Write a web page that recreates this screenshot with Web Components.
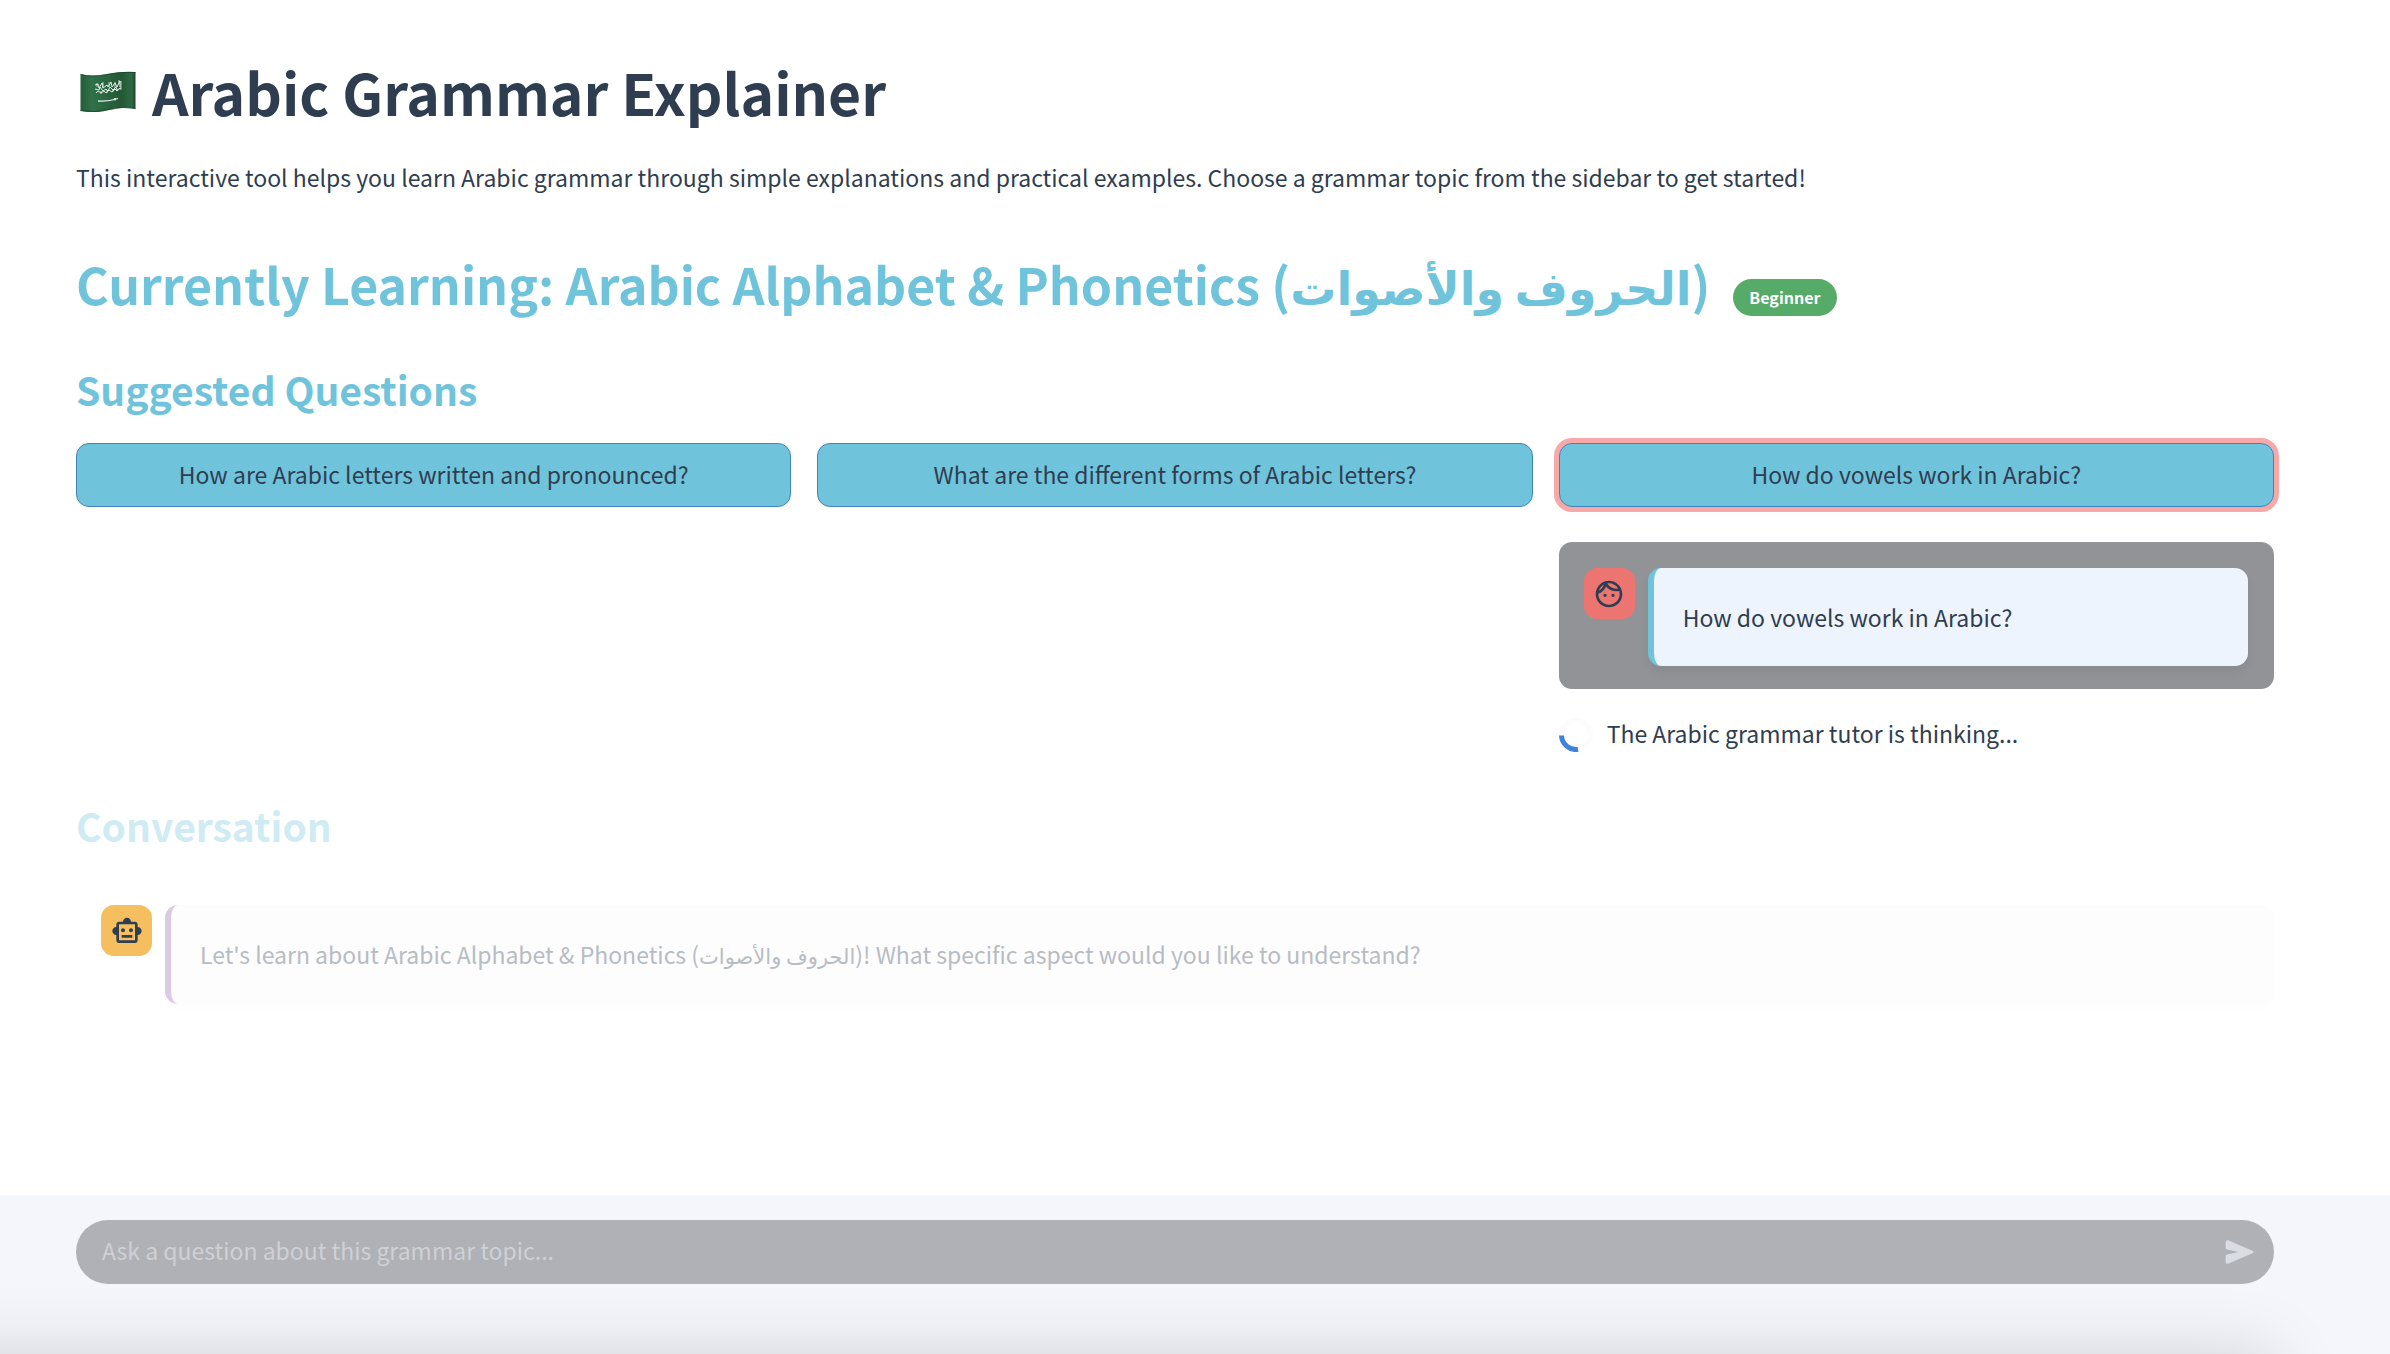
<!DOCTYPE html>
<html lang="en">
<head>
<meta charset="utf-8">
<title>Arabic Grammar Explainer</title>
<style>
html, body { margin: 0; height: 100%; background: #fff; }
body { font: 23px/40px "Noto Sans CJK SC", "Noto Sans", "DejaVu Sans", sans-serif; color: #2f3d50; }
</style>
</head>
<body>
<grammar-app></grammar-app>
<script>
const define = (name, html, setup) => customElements.define(name, class extends HTMLElement {
  constructor() {
    super();
    const t = document.createElement('template');
    t.innerHTML = html;
    this.attachShadow({ mode: 'open' }).append(t.content.cloneNode(true));
  }
  connectedCallback() { if (setup) setup(this, this.shadowRoot); }
});

define('flag-icon', `
<style>:host{display:block;width:56px;height:42px}svg{display:block;width:100%;height:100%}</style>
<svg viewBox="0 0 56 42" aria-hidden="true">
  <defs><linearGradient id="g" x1="0" x2="1"><stop offset="0" stop-color="#255c39"/><stop offset=".2" stop-color="#2f7148"/><stop offset=".45" stop-color="#2a6740"/><stop offset=".75" stop-color="#235834"/><stop offset=".93" stop-color="#2c6b43"/><stop offset="1" stop-color="#1c4229"/></linearGradient></defs>
  <path d="M.5 4Q12 7 27 4T55.500 2V39Q43 36 29 40T.5 41Z" fill="url(#g)"/>
  <path d="M.5 4.500Q12 7.500 27 4.500T55.500 2.500M.5 40.500Q15 43 29 39.500T55.500 38.500" fill="none" stroke="#173b24" stroke-opacity=".6"/>
  <g fill="none" stroke="#e4ede6" stroke-width="1" transform="translate(0 1)">
    <path d="M15 14l3-1 1 4 3-5 1 5 4-3 1 2 3-5 1 5 3-4 2 4 3-6v6"/>
    <path d="M15 18l4 1 1-3 3 4 3-2 2 2 2-4 3 3 3-3 1 3 4-2"/>
    <path d="M16 22l2-2 3 2 3-2 2 2 3-3 3 2 3-3 2 2 3-3"/>
    <path d="M17 12v4M23 11v6M29 11v5M35 11v6M39 9v4M21 20v3M27 19v3M33 18v3M41 10v9" stroke-width=".8"/>
    <path d="M18 30Q27 31 38 27.500M35 27v2.500" stroke-width="1.300"/>
  </g>
</svg>`);

define('page-title', `
<style>:host{display:block}h1{display:flex;align-items:center;gap:16px;margin:0;padding-left:4px;font-size:57px;line-height:76px;font-weight:700}</style>
<h1><flag-icon></flag-icon><span><slot></slot></span></h1>`);

define('section-title', `
<style>:host{display:block}h3{margin:0;font-size:39px;line-height:54px;font-weight:700;color:#6fc4dc}:host([stale]) h3{opacity:.33}</style>
<h3><slot></slot></h3>`);

define('level-badge', `
<style>:host{display:block;background:#56ab68;color:#fff;border-radius:19px;padding:0 16px;font-size:16px;line-height:37px;font-weight:700}</style>
<slot></slot>`);

define('topic-heading', `
<style>:host{display:flex;align-items:center;gap:23px}h2{margin:0;font-size:50px;line-height:70px;font-weight:700;color:#6fc4dc}level-badge{margin-top:26px}</style>
<h2><slot></slot></h2><level-badge><slot name="level"></slot></level-badge>`);

define('question-button', `
<style>:host{display:block}button{display:block;width:100%;height:64px;margin:0;padding:0 16px 2px;border:1px solid #4383bb;border-radius:13px;background:#6fc4dc;color:inherit;font:inherit;outline:none}
:host([active]) button{box-shadow:0 0 0 5px #f7a9a7}</style>
<button type="button"><slot></slot></button>`);

define('chat-avatar', `
<style>:host{display:flex;flex:none;align-items:center;justify-content:center;width:51px;height:51px;border-radius:13px;background:#f5bf5f}
:host([kind=user]){background:#ed7571}svg{width:32px;height:32px;fill:#2f3d50;display:none}
:host([kind=user]) .u,:host([kind=bot]) .b{display:block}</style>
<svg class="u" viewBox="0 0 24 24" aria-hidden="true"><path d="M10.250 13c0 .69-.56 1.250-1.250 1.250S7.750 13.690 7.750 13s.56-1.250 1.250-1.250 1.250.56 1.250 1.250zM15 11.750c-.69 0-1.250.56-1.250 1.250s.56 1.250 1.250 1.250 1.250-.56 1.250-1.250-.56-1.250-1.250-1.250zm7 .25c0 5.520-4.480 10-10 10S2 17.520 2 12 6.480 2 12 2s10 4.480 10 10zM10.660 4.120C12.060 6.440 14.600 8 17.500 8c.46 0 .91-.05 1.340-.12C17.440 5.560 14.900 4 12 4c-.46 0-.91.05-1.340.12zM4.420 9.470c1.710-.97 3.030-2.550 3.660-4.440C6.370 6 5.050 7.580 4.420 9.470zM20 12c0-.78-.12-1.530-.33-2.240-.7.150-1.420.240-2.170.240-3.130 0-5.920-1.440-7.760-3.690C8.690 8.870 6.600 10.880 4 11.860c.01.04 0 .09 0 .14 0 4.410 3.590 8 8 8s8-3.590 8-8z"/></svg>
<svg class="b" viewBox="0 0 24 24" aria-hidden="true"><path d="M20 9V7c0-1.100-.9-2-2-2h-3c0-1.660-1.340-3-3-3S9 3.340 9 5H6c-1.100 0-2 .9-2 2v2c-1.660 0-3 1.340-3 3s1.340 3 3 3v4c0 1.100.9 2 2 2h12c1.100 0 2-.9 2-2v-4c1.660 0 3-1.340 3-3s-1.340-3-3-3zm-2 10H6V7h12v12zM9 13c-.83 0-1.500-.67-1.500-1.500S8.170 10 9 10s1.500.67 1.500 1.500S9.830 13 9 13zm7.500-1.500c0 .83-.67 1.500-1.500 1.500s-1.500-.67-1.500-1.500.67-1.500 1.500-1.500 1.500.67 1.500 1.500zM8 15h8v2H8v-2z"/></svg>`);

define('chat-message', `
<style>:host{display:flex;align-items:flex-start;gap:13px;padding:26px 26px 23px 25px;border-radius:13px;background:#929397}
.bubble{flex:1;box-sizing:border-box;border-left:6px solid #6fc4dc;border-radius:13px;background:#edf4fd;padding:29px;line-height:40px;box-shadow:0 6px 10px rgba(0,0,0,.06)}
:host([kind=bot]){background:none;padding-right:0}
:host([kind=bot]) .bubble{border-color:#dbc9e6;background:#fdfdfd;color:#b7bcc4;box-shadow:0 4px 10px rgba(0,0,0,.01)}</style>
<chat-avatar></chat-avatar><div class="bubble"><slot></slot></div>`,
(host, root) => root.querySelector('chat-avatar').setAttribute('kind', host.getAttribute('kind')));

define('thinking-status', `
<style>:host{display:flex;align-items:center;gap:14px}svg{width:34px;height:34px;margin-top:4px;flex:none}</style>
<svg viewBox="0 0 34 34" aria-hidden="true"><circle cx="17" cy="17" r="14.500" fill="none" stroke="#fcfcfd" stroke-width="5"/><path d="M2.500 17.500A14.500 14.500 0 0 0 19 31.400" fill="none" stroke="#3f82dc" stroke-width="5"/></svg>
<span><slot></slot></span>`);

define('chat-box', `
<style>:host{display:block;box-sizing:border-box;height:159px;overflow:hidden;padding:25px 116px 0 76px;background:#f5f6fb}
:host::after{content:"";display:block;height:160px;margin:70px 0 0 -200px;box-shadow:0 0 70px rgba(0,0,0,.15)}
form{display:flex;align-items:center;height:64px;border-radius:32px;background:#b0b1b6;padding:0 14px 0 26px}
input{flex:1;min-width:0;border:0;outline:0;background:none;padding:0 0 4px;font:inherit;line-height:40px;color:#2f3d50}
input::placeholder{color:#cfd0d5;opacity:1}
button{display:flex;border:0;background:none;padding:0}svg{width:40px;height:40px;fill:#dadce4}</style>
<form><input type="text" aria-label="Ask a question" placeholder="Ask a question about this grammar topic..."><button type="button" aria-label="Send"><svg viewBox="0 0 24 24" aria-hidden="true"><path d="M3.400 18.100V14.400Q3.400 13.600 4.200 13.500L11 12 4.200 10.500Q3.400 10.300 3.400 9.600V5.900Q3.600 4.700 4.800 5L19.500 11.200Q20.800 12 19.500 12.800L4.800 19Q3.600 19.300 3.400 18.100Z"/></svg></button></form>`);

define('grammar-app', `
<style>:host{display:flex;flex-direction:column;min-height:100%}
main{flex:1;padding:53px 116px 40px 76px}
p{margin:28px 0 0}
topic-heading{margin-top:51px}
.suggested{margin-top:42px}
.grid{display:grid;grid-template-columns:repeat(3,minmax(0,1fr));gap:26px;margin-top:27px}
.answer{grid-column:3;display:flex;flex-direction:column;gap:24px;margin-top:9px}
.conversation{margin-top:45px}
.history{margin-top:27px}
.ar{font-size:46px}
.ar2{font-size:21px}</style>
<main>
<page-title>Arabic Grammar Explainer</page-title>
<p>This interactive tool helps you learn Arabic grammar through simple explanations and practical examples. Choose a grammar topic from the sidebar to get started!</p>
<topic-heading>Currently Learning: Arabic Alphabet &amp; Phonetics (<span class="ar">الحروف والأصوات</span>)<span slot="level">Beginner</span></topic-heading>
<section-title class="suggested">Suggested Questions</section-title>
<div class="grid">
<question-button>How are Arabic letters written and pronounced?</question-button>
<question-button>What are the different forms of Arabic letters?</question-button>
<question-button active>How do vowels work in Arabic?</question-button>
<div class="answer"><chat-message kind="user">How do vowels work in Arabic?</chat-message><thinking-status>The Arabic grammar tutor is thinking...</thinking-status></div>
</div>
<section-title class="conversation" stale>Conversation</section-title>
<chat-message class="history" kind="bot">Let's learn about Arabic Alphabet &amp; Phonetics (<span class="ar2">الحروف والأصوات</span>)! What specific aspect would you like to understand?</chat-message>
</main>
<chat-box></chat-box>`);
</script>
</body>
</html>
